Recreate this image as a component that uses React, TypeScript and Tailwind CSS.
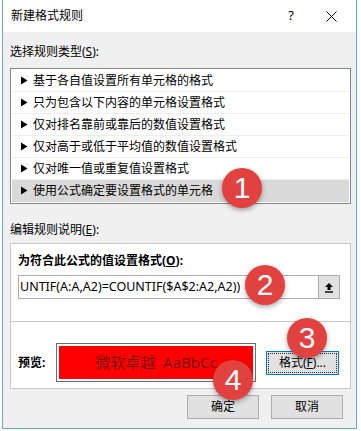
import React from 'react'

const FONT = "font-['Noto_Sans','Noto_Sans_CJK_SC',sans-serif]"

const RULES = [
  '基于各自值设置所有单元格的格式',
  '只为包含以下内容的单元格设置格式',
  '仅对排名靠前或靠后的数值设置格式',
  '仅对高于或低于平均值的数值设置格式',
  '仅对唯一值或重复值设置格式',
  '使用公式确定要设置格式的单元格',
]

// numbered red markers drawn over the dialog
const BADGES = [
  { n: 1, x: 222, y: 168 },
  { n: 2, x: 245, y: 265 },
  { n: 3, x: 287, y: 318 },
  { n: 4, x: 213, y: 360 },
]

function Triangle() {
  return (
    <svg width="8" height="9" viewBox="0 0 8 9" className="shrink-0">
      <path d="M1 0.5 L7.5 4.5 L1 8.5 Z" fill="#000" />
    </svg>
  )
}

export default function App() {
  return (
    <div className={`relative w-[361px] h-[431px] overflow-hidden bg-white ${FONT} text-[12px] text-black`}>
      <div className="pl-[2px] pr-[4px]">
        {/* dialog */}
        <div className="w-[355px] h-[429px] border-x border-b border-[#6ea3d8] flex flex-col bg-[#f0f0f0]">
          {/* title bar */}
          <div className="h-[32px] bg-white flex items-center pl-[8px] shrink-0">
            <span className="text-[12px]">新建格式规则</span>
            <span className="ml-auto w-[20px] text-center text-[13px] mr-[25px]">?</span>
            <svg width="11" height="11" viewBox="0 0 11 11" className="mr-[19px]">
              <path d="M0.5 0.5 L10.5 10.5 M10.5 0.5 L0.5 10.5" stroke="#000" strokeWidth="1" />
            </svg>
          </div>

          <div className="flex flex-col pl-[7px] pt-[10px]">
            <div className="h-[20px] flex items-center">
              选择规则类型(<span className="underline">S</span>):
            </div>

            {/* rule type list */}
            <div className="mt-[6px] w-[341px] border border-[#828790] bg-white p-[1px] flex flex-col">
              {RULES.map((r, i) => (
                <div
                  key={r}
                  className={`h-[22px] flex items-center gap-[5px] pl-[8px] border-b ${
                    i === RULES.length - 1 ? 'bg-[#d9d9d9] border-transparent' : 'border-[#eeeeee]'
                  }`}
                >
                  <Triangle />
                  <span>{r}</span>
                </div>
              ))}
            </div>

            <div className="mt-[16px] h-[20px] flex items-center">
              编辑规则说明(<span className="underline">E</span>):
            </div>

            {/* rule description */}
            <div className="mt-[3px] w-[341px] border border-[#c8c8c8] bg-white flex flex-col">
              <div className="pl-[7px] pt-[7px] pb-[22px]">
                <div className="h-[20px] flex items-center font-bold">
                  为符合此公式的值设置格式(<span className="underline">O</span>):
                </div>
                <div className="mt-[4px] w-[322px] h-[24px] border border-[#adadad] flex items-center">
                  <span className="pl-[1px] text-[12.5px] whitespace-nowrap overflow-hidden flex-1">
                    UNTIF(A:A,A2)=COUNTIF($A$2:A2,A2))
                  </span>
                  <div className="w-[21px] h-[22px] bg-[#e1e1e1] border-l border-[#adadad] flex items-center justify-center">
                    <svg width="10" height="11" viewBox="0 0 10 11">
                      <path d="M5 1 L9 5 L6.5 5 L6.5 8 L3.5 8 L3.5 5 L1 5 Z" fill="#000" />
                      <path d="M1 10 H9" stroke="#000" strokeWidth="1.4" />
                    </svg>
                  </div>
                </div>
              </div>
              <div className="border-t border-[#c8c8c8] pt-[21px] pb-[6px] pl-[7px] flex items-center">
                <span className="w-[38px] font-bold">预览:</span>
                <div className="w-[200px] h-[39px] border border-[#6d6d6d] p-[2px]">
                  <div className="h-full bg-[#ff0000] flex items-center justify-center text-[15px] text-[#7a1010]">
                    微软卓越&nbsp;&nbsp;AaBbCc
                  </div>
                </div>
                <div className="ml-[10px] w-[73px] h-[24px] border border-[#0078d7] bg-[#e1e1e1] p-[1px]">
                  <div className="h-full border border-dotted border-[#333] flex items-center justify-center">
                    格式(<span className="underline">F</span>)...
                  </div>
                </div>
              </div>
            </div>

            {/* footer buttons */}
            <div className="mt-[6px] flex gap-[12px] pl-[177px]">
              <div className="w-[72px] h-[24px] border border-[#adadad] bg-[#e1e1e1] flex items-center justify-center">
                确定
              </div>
              <div className="w-[72px] h-[24px] border border-[#adadad] bg-[#e1e1e1] flex items-center justify-center">
                取消
              </div>
            </div>
          </div>
        </div>
      </div>

      {BADGES.map((b) => (
        <div
          key={b.n}
          className="absolute w-[40px] h-[40px] rounded-full bg-[#e2423f] shadow-[0_2px_5px_rgba(0,0,0,0.35)] flex items-center justify-center text-white text-[30px] font-['Liberation_Sans',sans-serif] leading-none"
          style={{ left: b.x, top: b.y }}
        >
          {b.n}
        </div>
      ))}
    </div>
  )
}
